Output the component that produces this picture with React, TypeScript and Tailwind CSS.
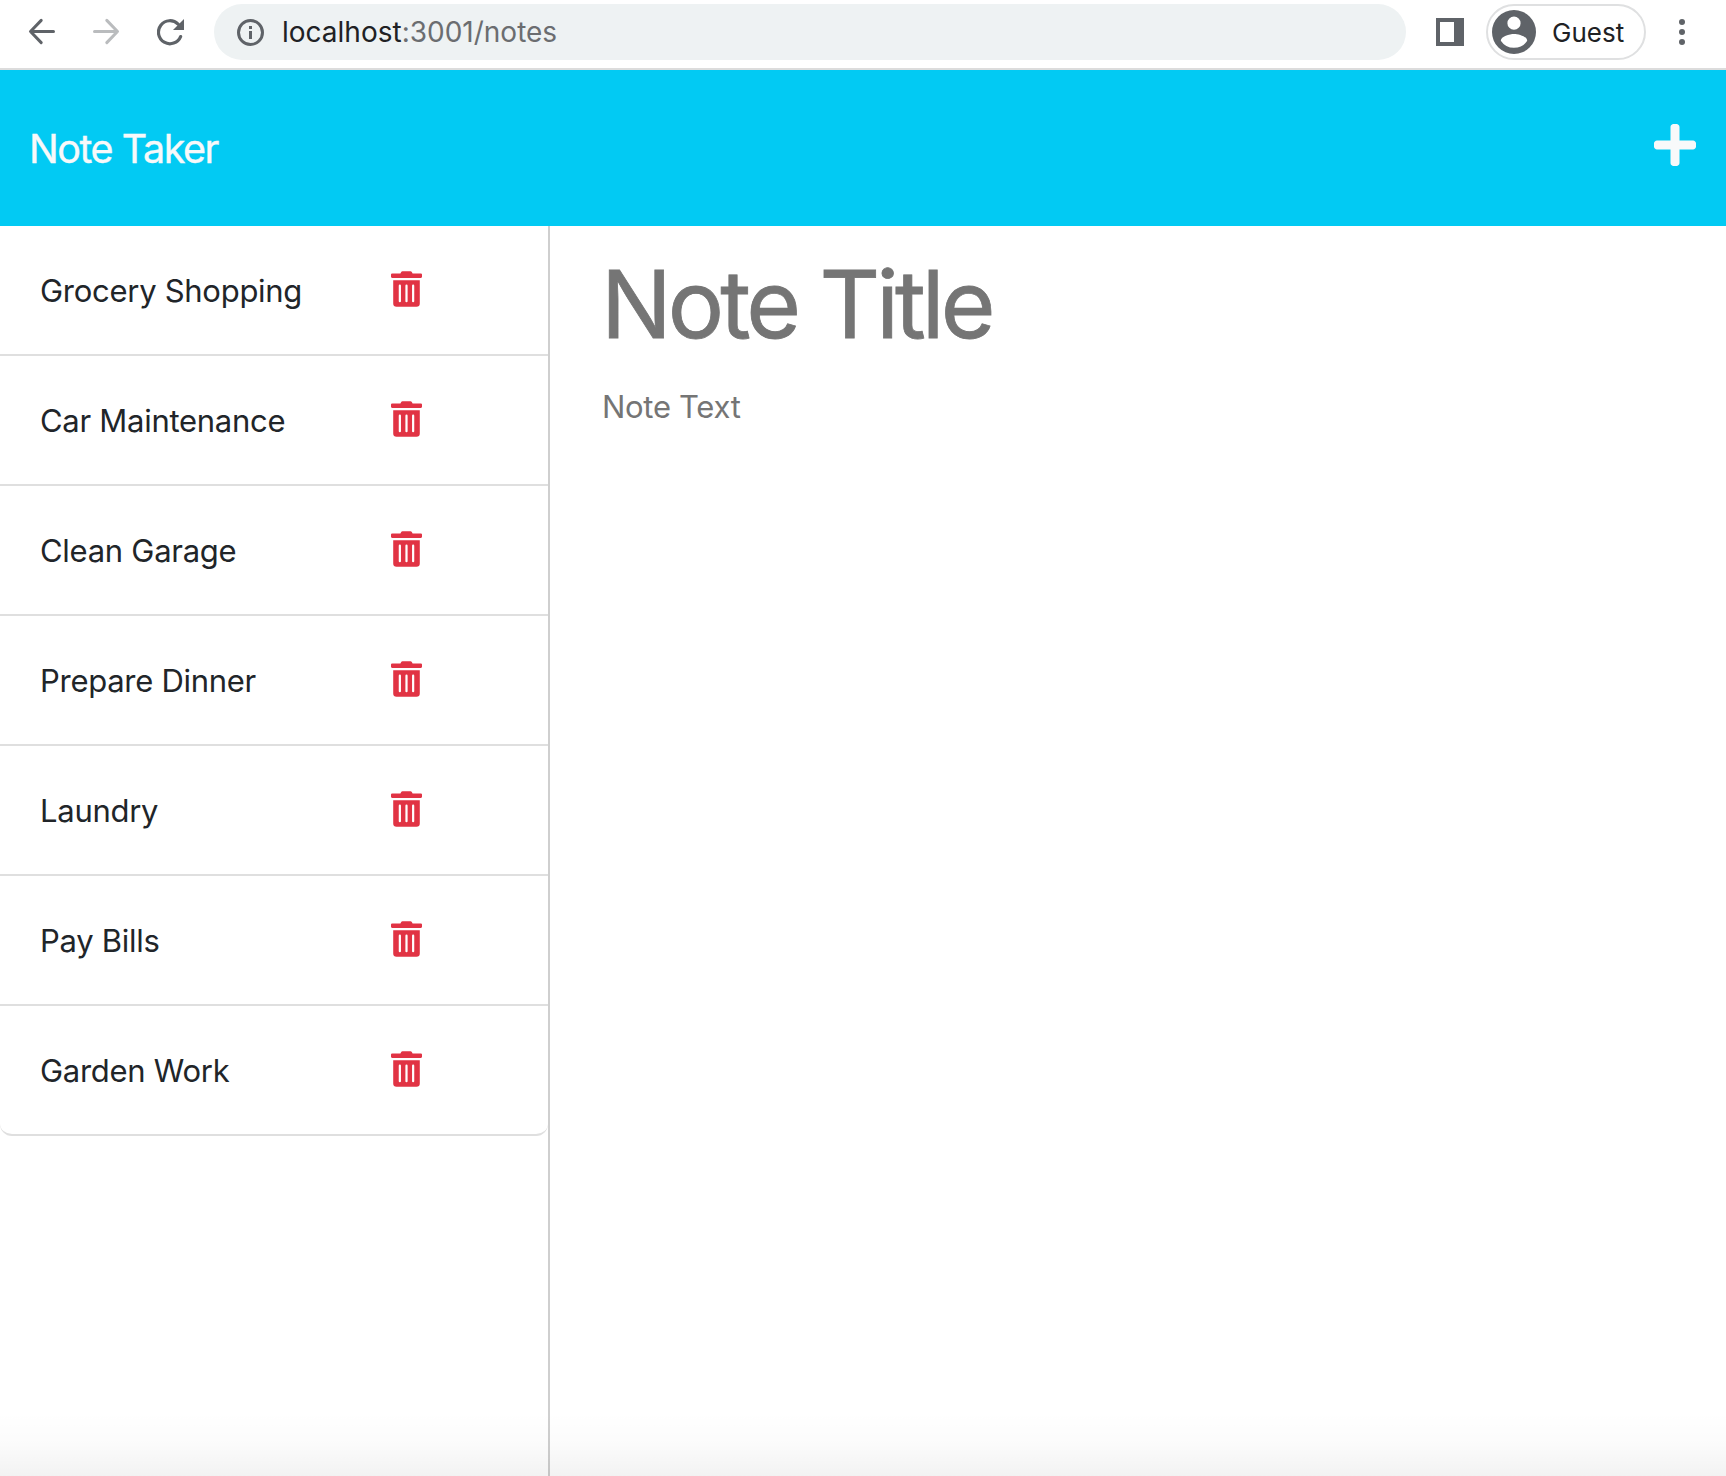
import { FaPlus, FaTrashAlt } from "react-icons/fa";

const notes = [
  "Grocery Shopping",
  "Car Maintenance",
  "Clean Garage",
  "Prepare Dinner",
  "Laundry",
  "Pay Bills",
  "Garden Work",
];

function ArrowIcon({ className }: { className: string }) {
  return (
    <svg
      viewBox="0 0 28 28"
      className={className}
      fill="none"
      stroke="currentColor"
      strokeWidth="3"
      strokeLinecap="round"
      strokeLinejoin="round"
    >
      <path d="M25.500 13.500H2.700M13.200 2.400 2.500 13.500l10.700 11.100" />
    </svg>
  );
}

function BrowserBar() {
  return (
    <div className="flex h-[70px] shrink-0 items-start border-b-2 border-[#dcdcdc] bg-white pt-1 pl-7 text-[#5f6368]">
      <div className="flex h-14 w-[186px] shrink-0 items-center">
        <ArrowIcon className="size-7" />
        <ArrowIcon className="ml-9 size-7 -scale-x-100 text-[#babcbe]" />
        <svg viewBox="0 0 27 27" className="ml-[37px] size-[27px]">
          <path
            d="M21.1 5.100A11.500 11.500 0 1 0 23.600 17.600"
            fill="none"
            stroke="currentColor"
            strokeWidth="3.200"
            strokeLinecap="round"
          />
          <path d="M27 0v11H16z" fill="currentColor" />
        </svg>
      </div>
      <div className="flex h-14 w-[1192px] shrink-0 items-center rounded-full bg-[#eef2f3] pl-[23px]">
        <svg viewBox="0 0 27 27" className="size-[27px]">
          <circle cx="13.5" cy="13.5" r="12" fill="none" stroke="currentColor" strokeWidth="3" />
          <path d="M12 7h3v3h-3zm0 5h3v8h-3z" fill="currentColor" />
        </svg>
        <span className="ml-[18px] text-[28px] whitespace-pre text-[#6b6d70]">
          <span className="text-[#202124]">localhost</span>:3001/notes
        </span>
      </div>
      <div className="flex h-14 items-center">
        <div className="ml-[30px] h-7 w-7 border-4 border-r-10 border-current" />
        <div className="ml-[22px] flex h-14 w-40 items-center rounded-full border-2 border-[#dfe0e1] pl-1">
          <svg viewBox="2 2 20 20" className="size-11" fill="currentColor">
            <path d="M12 2a10 10 0 1 0 0 20 10 10 0 0 0 0-20m0 3a3 3 0 1 1 0 6 3 3 0 0 1 0-6m0 14.200a7.200 7.200 0 0 1-6-3.220c.03-1.990 4-3.080 6-3.080s5.970 1.090 6 3.080a7.200 7.200 0 0 1-6 3.220" />
          </svg>
          <span className="ml-4 text-[26px] text-[#202124]">Guest</span>
        </div>
        <div className="ml-[33px] flex flex-col gap-1">
          <span className="size-1.5 rounded-full bg-current" />
          <span className="size-1.5 rounded-full bg-current" />
          <span className="size-1.5 rounded-full bg-current" />
        </div>
      </div>
    </div>
  );
}

export default function App() {
  return (
    <div className="relative flex h-[1476px] w-[1726px] flex-col overflow-hidden bg-white font-['Inter',sans-serif]">
      <BrowserBar />
      <header className="flex h-[156px] shrink-0 items-center justify-between bg-[#02caf3] px-[29px] pr-[30px] text-[#f8f9fa]">
        <h1 className="mt-1 text-[39.5px] tracking-[-0.037em] [-webkit-text-stroke:0.4px]">
          Note Taker
        </h1>
        <FaPlus className="h-12 w-[42px] -translate-y-[3px]" />
      </header>
      <main className="flex min-h-0 flex-1">
        <ul className="w-[550px] shrink-0 border-r-2 border-[#cfcfcf] text-[#212529]">
          {notes.map((note) => (
            <li
              key={note}
              className="flex h-[130px] items-center border-b-2 border-[#dfdfdf] pl-10 last:rounded-b-xl"
            >
              <span className="mt-0.5 w-[351px] text-[31px] tracking-[-0.28px]">{note}</span>
              <FaTrashAlt className="h-9 w-[31px] -translate-y-px text-[#e13344]" />
            </li>
          ))}
        </ul>
        <section className="flex flex-1 flex-col pl-[52px] text-[#757575]">
          <h2 className="-ml-px mt-5 h-[116px] text-[94px] leading-[116px] tracking-[-0.042em] [-webkit-text-stroke:0.8px]">
            Note Title
          </h2>
          <p className="mt-[21px] text-[31px] leading-12 tracking-[-0.3px]">Note Text</p>
        </section>
      </main>
      <div className="pointer-events-none absolute inset-x-0 bottom-0 h-16 bg-linear-to-t from-black/5 via-black/[0.015] to-transparent" />
    </div>
  );
}
